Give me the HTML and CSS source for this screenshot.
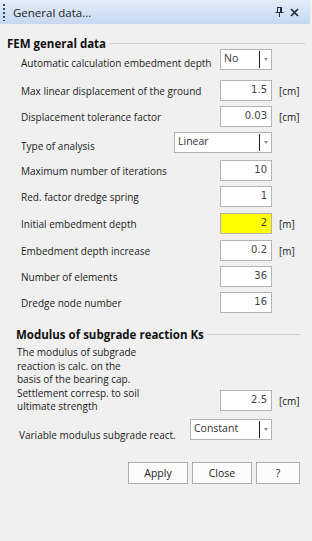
FILE: index.html
```html
<!DOCTYPE html>
<html lang="en">

<head>
  <meta charset="UTF-8">
  <meta name="viewport" content="width=device-width, initial-scale=1.0">
  <title>General data</title>
  <link rel="stylesheet" href="styles.css">
</head>

<body>
  <div class="panel">
    <div class="titlebar">
      <span class="grip"></span>
      <span class="title">General data...</span>
      <span class="tools">
        <svg class="pin" width="9" height="10" viewBox="0 0 9 10">
          <path d="M2 0.5H7M2.5 0.5V5M6.5 0.5V5M5.5 0.5V5M0.5 5.5H8.5M4.5 5.5V10" stroke="#1f2d40" stroke-width="1" fill="none" />
        </svg>
        <svg class="close" width="9" height="9" viewBox="0 0 9 9">
          <path d="M1 1L8 8M8 1L1 8" stroke="#1f2d40" stroke-width="1.7" fill="none" />
        </svg>
      </span>
    </div>

    <div class="content">
      <div class="group-head fem"><span>FEM general data</span></div>

      <div class="row first sel">
        <span class="label">Automatic calculation embedment depth</span>
        <div class="select small"><span class="val">No</span><span class="drop"></span></div>
        <span class="unit"></span>
      </div>
      <div class="row wide">
        <span class="label">Max linear displacement of the ground</span>
        <div class="field">1.5</div>
        <span class="unit">[cm]</span>
      </div>
      <div class="row">
        <span class="label">Displacement tolerance factor</span>
        <div class="field">0.03</div>
        <span class="unit">[cm]</span>
      </div>
      <div class="row sel">
        <span class="label">Type of analysis</span>
        <div class="select big"><span class="val">Linear</span><span class="drop"></span></div>
        <span class="unit"></span>
      </div>
      <div class="row mid">
        <span class="label">Maximum number of iterations</span>
        <div class="field">10</div>
        <span class="unit"></span>
      </div>
      <div class="row">
        <span class="label">Red. factor dredge spring</span>
        <div class="field">1</div>
        <span class="unit"></span>
      </div>
      <div class="row plus">
        <span class="label">Initial embedment depth</span>
        <div class="field yellow">2</div>
        <span class="unit">[m]</span>
      </div>
      <div class="row plus">
        <span class="label">Embedment depth increase</span>
        <div class="field">0.2</div>
        <span class="unit">[m]</span>
      </div>
      <div class="row">
        <span class="label">Number of elements</span>
        <div class="field">36</div>
        <span class="unit"></span>
      </div>
      <div class="row">
        <span class="label">Dredge node number</span>
        <div class="field">16</div>
        <span class="unit"></span>
      </div>

      <div class="group-head ks"><span>Modulus of subgrade reaction Ks</span></div>

      <div class="row note">
        <p class="label">The modulus of subgrade<br>reaction is calc. on the<br>basis of the bearing cap.<br>Settlement corresp. to soil<br>ultimate strength</p>
        <div class="field">2.5</div>
        <span class="unit">[cm]</span>
      </div>
      <div class="row sel last">
        <span class="label">Variable modulus subgrade react.</span>
        <div class="select mid"><span class="val">Constant</span><span class="drop"></span></div>
        <span class="unit"></span>
      </div>

      <div class="buttons">
        <button class="btn">Apply</button>
        <button class="btn">Close</button>
        <button class="btn help">?</button>
      </div>
    </div>
  </div>
</body>

</html>
```

FILE: styles.css
```css
* {
  padding: 0;
  margin: 0;
  box-sizing: border-box;
}

body {
  width: 312px;
  height: 541px;
  overflow: hidden;
  background-color: #f0f0f0;
  font-family: "Open Sans", "Noto Sans", sans-serif;
  font-size: 10px;
  color: #1b1b1b;
}

.titlebar {
  display: flex;
  align-items: center;
  height: 24px;
  margin-right: 2px;
  background: linear-gradient(#e3edf9, #c5d8f0);
}

.grip {
  width: 2px;
  height: 17px;
  margin: 0 8px 0 3px;
  background: repeating-linear-gradient(to bottom, #2d4a72 0 2px, transparent 2px 4px);
}

.title {
  flex: 1;
  font-size: 11.5px;
  color: #1e1e1e;
}

.tools {
  display: flex;
  align-items: center;
  gap: 6px;
  padding-right: 11px;
}

.content {
  padding-top: 12px;
}

.group-head {
  display: flex;
  align-items: center;
  gap: 3px;
  height: 14px;
  font-size: 11.5px;
  font-weight: 700;
  color: #111;
}

.group-head::after {
  content: "";
  flex: 1;
  height: 1px;
  background-color: #cdcdcd;
}

.fem {
  padding: 0 7px;
}

.ks {
  margin-top: 14px;
  padding: 0 12px 0 16px;
}

.row {
  display: flex;
  align-items: center;
  min-height: 21px;
  margin-top: 5px;
  padding-left: 21px;
}

.row.first {
  margin-top: -1px;
}

.row.wide {
  margin-top: 10px;
}

.row.mid {
  margin-top: 7px;
}

.row.plus {
  margin-top: 6px;
}

.label {
  flex: 1;
}

.row.sel .label {
  padding-top: 6px;
}

.row.last .label {
  padding-top: 10px;
}

.unit {
  width: 40px;
  padding-left: 7px;
}

.field {
  width: 52px;
  height: 21px;
  padding-right: 4px;
  border: 1px solid #b3b3b3;
  background-color: #fff;
  text-align: right;
  font-family: "DejaVu Sans", sans-serif;
  font-size: 10px;
  line-height: 18px;
  color: #444;
}

.field.yellow {
  background-color: #ffff00;
}

.select {
  display: flex;
  height: 21px;
  border: 1px solid #b3b3b3;
  background-color: #fff;
}

.select.small {
  width: 52px;
}

.select.big {
  width: 98px;
}

.select.mid {
  width: 82px;
}

.select .val {
  flex: 1;
  padding: 1px 0 0 3px;
  font-size: 10.5px;
  line-height: 14px;
  color: #333;
}

.select .drop {
  position: relative;
  width: 12px;
  margin: 1px 0;
  border-left: 1px solid #1e1e1e;
}

.select .drop::after {
  content: "";
  position: absolute;
  left: 4px;
  top: 7px;
  border-left: 2px solid transparent;
  border-right: 2px solid transparent;
  border-top: 3px solid #8a8a8a;
}

.row.note {
  align-items: flex-end;
  margin-top: 5px;
  padding-left: 17px;
}

.row.note .label {
  line-height: 13.5px;
}

.row.note .field {
  margin-bottom: 3px;
}

.row.note .unit {
  padding-bottom: 6px;
}

.row.last {
  margin-top: 4px;
  padding-left: 19px;
}

.buttons {
  display: flex;
  justify-content: flex-end;
  gap: 4px;
  margin-top: 20px;
  padding-right: 12px;
}

.btn {
  width: 60px;
  height: 22px;
  border: 1px solid #adadad;
  background-color: #fcfcfc;
  font-family: "Open Sans", "Noto Sans", sans-serif;
  font-size: 10.5px;
  color: #1b1b1b;
}

.btn.help {
  width: 44px;
}
```
